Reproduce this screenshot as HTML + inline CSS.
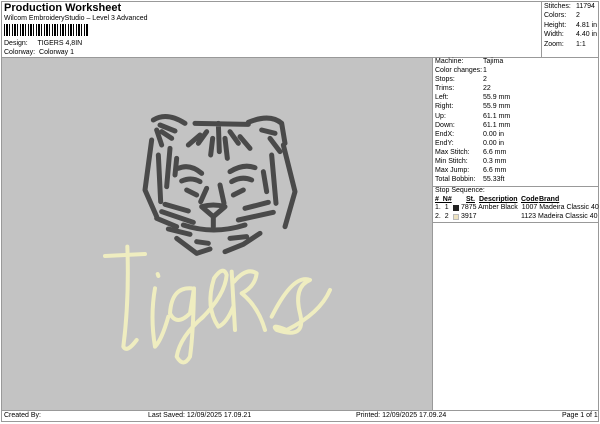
<!DOCTYPE html>
<html><head><meta charset="utf-8"><style>
*{margin:0;padding:0;box-sizing:border-box}
body{width:600px;height:424px;background:#fff;font-family:"Liberation Sans",Arial,sans-serif;font-size:7px;color:#000;position:relative;overflow:hidden}
.a{position:absolute;white-space:nowrap}
.ln{position:absolute;background:#999}
</style></head><body>
<div class="ln" style="left:1px;top:1px;width:598px;height:1px"></div>
<div class="ln" style="left:1px;top:1px;width:1px;height:420px"></div>
<div class="ln" style="left:598px;top:1px;width:1px;height:420px"></div>
<div class="ln" style="left:1px;top:57px;width:598px;height:1px"></div>
<div class="ln" style="left:541px;top:1px;width:1px;height:57px"></div>
<div class="ln" style="left:1px;top:410px;width:598px;height:1px"></div>
<div class="ln" style="left:1px;top:421px;width:598px;height:1px"></div>
<div class="a" style="left:4px;top:2px;font-size:11px;font-weight:bold">Production Worksheet</div>
<div class="a" style="left:4px;top:15px">Wilcom EmbroideryStudio – Level 3 Advanced</div>
<div class="a" style="left:4px;top:24px;width:85px;height:12px;background:repeating-linear-gradient(90deg,#000 0 1px,#fff 1px 2px,#000 2px 4px,#fff 4px 5px,#000 5px 6px,#fff 6px 8px)"></div>
<div class="a" style="left:4px;top:40px">Design:&nbsp;&nbsp;&nbsp;&nbsp;&nbsp;TIGERS 4,8IN</div>
<div class="a" style="left:4px;top:49px">Colorway:&nbsp; Colorway 1</div>
<div class="a" style="left:544px;top:2px;line-height:9.4px">Stitches:<br>Colors:<br>Height:<br>Width:<br>Zoom:</div>
<div class="a" style="left:576px;top:2px;line-height:9.4px">11794<br>2<br>4.81 in<br>4.40 in<br>1:1</div>
<div class="a" style="left:2px;top:58px;width:430px;height:352px;background:#c3c3c3"></div>
<div class="ln" style="left:432px;top:58px;width:1px;height:352px"></div>
<div class="a" style="left:435px;top:57px;line-height:9.1px">Machine:<br>Color changes:<br>Stops:<br>Trims:<br>Left:<br>Right:<br>Up:<br>Down:<br>EndX:<br>EndY:<br>Max Stitch:<br>Min Stitch:<br>Max Jump:<br>Total Bobbin:</div>
<div class="a" style="left:483px;top:57px;line-height:9.1px">Tajima<br>1<br>2<br>22<br>55.9 mm<br>55.9 mm<br>61.1 mm<br>61.1 mm<br>0.00 in<br>0.00 in<br>6.6 mm<br>0.3 mm<br>6.6 mm<br>55.33ft</div>
<div class="ln" style="left:433px;top:186px;width:166px;height:1px"></div>
<div class="a" style="left:435px;top:187px">Stop Sequence:</div>
<div class="a" style="left:435px;top:196px;font-weight:bold;text-decoration:underline">#&nbsp;&nbsp;N#</div>
<div class="a" style="left:466px;top:196px;font-weight:bold;text-decoration:underline">St.</div>
<div class="a" style="left:479px;top:196px;font-weight:bold;text-decoration:underline">Description</div>
<div class="a" style="left:521px;top:196px;font-weight:bold;text-decoration:underline">Code</div>
<div class="a" style="left:539px;top:196px;font-weight:bold;text-decoration:underline">Brand</div>
<div class="a" style="left:435px;top:204px">1.&nbsp; 1</div>
<div class="a" style="left:453px;top:205px;width:6px;height:6px;background:#222"></div>
<div class="a" style="left:461px;top:204px">7875 Amber Black&nbsp; 1007 Madeira Classic 40</div>
<div class="a" style="left:435px;top:213px">2.&nbsp; 2</div>
<div class="a" style="left:453px;top:214px;width:6px;height:6px;background:#efe3c0;border:1px solid #bbb"></div>
<div class="a" style="left:461px;top:213px">3917</div>
<div class="a" style="left:521px;top:213px">1123 Madeira Classic 40</div>
<div class="ln" style="left:433px;top:222px;width:166px;height:1px"></div>
<div class="a" style="left:4px;top:412px">Created By:</div>
<div class="a" style="left:148px;top:412px">Last Saved: 12/09/2025 17.09.21</div>
<div class="a" style="left:356px;top:412px">Printed: 12/09/2025 17.09.24</div>
<div class="a" style="left:562px;top:412px">Page 1 of 1</div>
<svg class="a" style="left:130px;top:105px" width="170" height="160" viewBox="0 0 510 480" fill="none" stroke="#4a4a4a" stroke-width="15" stroke-linecap="round" stroke-linejoin="round">
<path d="M70,45 Q110,20 165,55 M90,60 L135,78 M95,80 L125,100 M80,75 L95,120"/>
<path d="M195,55 L355,58 M265,55 L268,140 M230,80 L205,115 M300,80 L325,115 M248,100 L242,150 M285,100 L292,160 M210,90 L175,120 M330,95 L360,130"/>
<path d="M355,52 Q420,25 455,55 L465,115 M395,75 L435,85 M420,100 L450,140"/>
<path d="M65,105 L45,255 L80,335 M85,150 L92,290 M120,130 L110,245 M140,160 L135,210"/>
<path d="M460,120 L495,260 L465,365 M425,150 L438,295 M400,200 L410,260"/>
<path d="M145,190 Q180,175 215,205 M155,228 Q185,215 210,230 M300,200 Q340,175 375,188 M305,230 Q335,212 365,225 M170,255 L200,270 M340,255 L310,270"/>
<path d="M215,305 Q250,295 285,305 L250,335 Z M250,335 L250,365 M270,240 L282,295 M230,250 L212,290"/>
<path d="M160,360 Q250,390 345,360 M95,320 L190,352 M325,345 L430,322 M105,298 L175,318 M345,310 L415,292 M80,340 L140,365"/>
<path d="M140,400 L200,445 L240,432 M285,440 L340,418 L390,385 M115,372 L180,388 M200,410 L235,415 M300,400 L350,395"/>
</svg>
<svg class="a" style="left:90px;top:100px" width="260" height="270" viewBox="0 0 780 810" fill="none" stroke="#efedc0" stroke-width="12" stroke-linecap="round" stroke-linejoin="round">
<path d="M112,440 Q118,600 100,740 Q110,760 140,720 M45,468 L165,462"/>
<path d="M195,565 Q180,650 195,740 Q215,720 235,650 M203,522 L205,528"/>
<path d="M305,565 Q245,560 240,640 Q260,680 300,640 L312,565 Q310,700 300,770 Q280,805 260,770 Q270,710 340,650"/>
<path d="M335,655 Q405,585 410,525 Q400,495 372,535 Q345,620 385,680 Q410,670 430,620"/>
<path d="M425,515 L435,690 M432,545 Q470,500 500,520 Q495,560 455,580 Q505,620 525,690"/>
<path d="M545,650 Q610,520 660,540 Q610,560 630,640 Q650,720 560,690 Q540,670 590,690 Q690,640 720,570"/>
</svg>
</body></html>
